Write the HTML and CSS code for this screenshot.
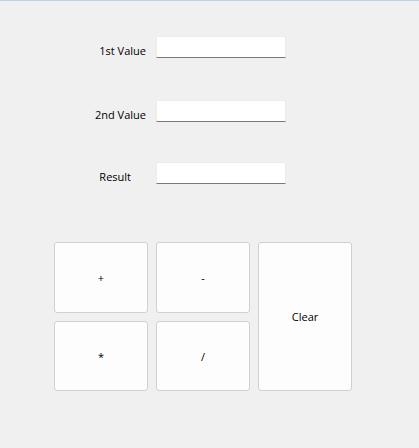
FILE: index.html
```html
<!DOCTYPE html>
<html>
<head>
<meta charset="utf-8">
<link rel="stylesheet" href="styles.css">
</head>
<body>
<div class="window">
  <div class="form">
    <label class="lbl">1st Value</label>
    <input class="field" type="text">
    <label class="lbl lbl-second">2nd Value</label>
    <input class="field field-second" type="text">
    <label class="lbl lbl-result">Result</label>
    <input class="field field-result" type="text">
  </div>
  <div class="pad">
    <button class="btn">+</button>
    <button class="btn">-</button>
    <button class="btn btn-clear">Clear</button>
    <button class="btn">*</button>
    <button class="btn">/</button>
  </div>
</div>
</body>
</html>
```
FILE: styles.css
```css
html, body {
  margin: 0;
  padding: 0;
  background: #f0f0f0;
}
body {
  width: 419px;
  height: 448px;
  overflow: hidden;
  font-family: "Open Sans", "Noto Sans", sans-serif;
  font-size: 11px;
  color: #000;
}
.window {
  border-top: 1px solid #b9d4ee;
  padding-top: 35px;
}
.form {
  display: grid;
  grid-template-columns: 146px 130px;
  column-gap: 10px;
  align-items: end;
}
.lbl {
  justify-self: end;
  line-height: 15px;
  margin-bottom: 0;
  white-space: nowrap;
}
.lbl-second, .field-second {
  margin-top: 42px;
}
.lbl-result, .field-result {
  margin-top: 40px;
}
.lbl-result {
  padding-right: 15px;
}
.field {
  box-sizing: border-box;
  width: 130px;
  height: 22px;
  margin-left: 0;
  margin-right: 0;
  margin-bottom: 0;
  padding: 0 3px;
  background: #fff;
  border: 1px solid #ececec;
  border-bottom: 1px solid #7a7a7a;
  border-radius: 0;
  font: inherit;
  outline: none;
}
.pad {
  display: grid;
  grid-template-columns: 94px 94px 94px;
  grid-template-rows: 71px 70px;
  gap: 8px;
  margin-top: 58px;
  padding-left: 54px;
}
.btn {
  box-sizing: border-box;
  margin: 0;
  padding: 0;
  background: #fdfdfd;
  border: 1px solid #d0d0d0;
  border-radius: 3px;
  font: inherit;
  color: #000;
}
.btn-clear {
  grid-column: 3;
  grid-row: 1 / span 2;
}
```
